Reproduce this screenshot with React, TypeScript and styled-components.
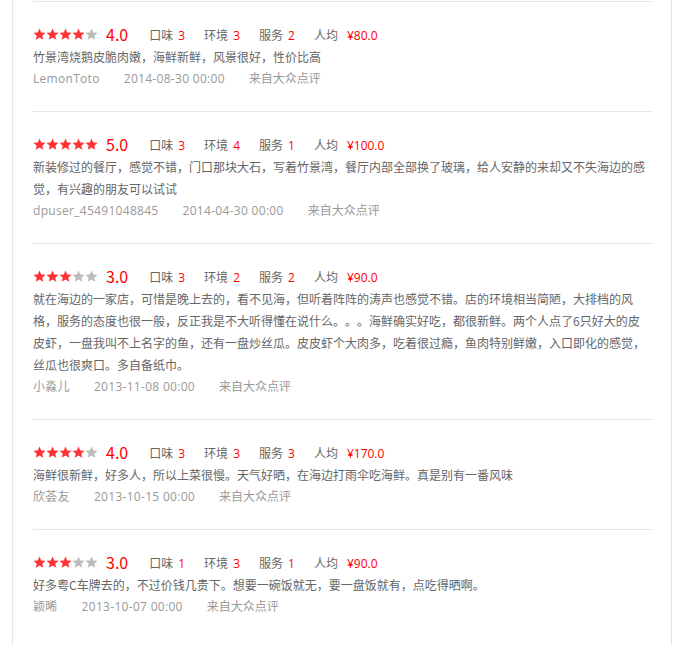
import styled, { createGlobalStyle } from "styled-components";

const GlobalStyle = createGlobalStyle`
	html, body {
		margin: 0;
		padding: 0;
		background: #ffffff;
	}

	body {
		font-family: "Open Sans", "Noto Sans CJK SC", sans-serif;
		font-size: 12px;
		color: #666666;
		text-spacing-trim: space-all;
	}
`;

const Panel = styled.div`
	margin-left: 12px;
	width: 660px;
	min-height: 645px;
	padding: 1px 19px 0 20px;
	box-sizing: border-box;
	border-left: 1px solid #e6e6e6;
	border-right: 1px solid #e6e6e6;
`;

const Review = styled.div`
	border-top: 1px solid #e6e6e6;
	padding: 22px 0 21px;
`;

const ScoreRow = styled.div`
	display: flex;
	align-items: center;
	height: 22px;
`;

const Stars = styled.div`
	display: flex;
	margin-top: -1px;
`;

const Score = styled.span`
	font-size: 16px;
	color: #ff0000;
	margin: -2px 21px 0 8px;
	font-family: "Noto Sans CJK SC", sans-serif;
`;

const Rating = styled.span`
	color: #666666;
	margin-right: 19px;
	font-family: "Noto Sans CJK SC", sans-serif;
`;

const RatingValue = styled.span<{ $gap: number }>`
	color: #ff0000;
	margin-left: ${(p) => p.$gap}px;
	font-family: "Open Sans", sans-serif;
`;

const Content = styled.p`
	margin: 0;
	padding-right: 4px;
	line-height: 22px;
	color: #666666;
	font-family: "Noto Sans CJK SC", sans-serif;
	text-spacing-trim: space-all;
`;

const Meta = styled.div`
	display: flex;
	line-height: 22px;
	color: #999999;
`;

const MetaItem = styled.span<{ $wide?: boolean }>`
	margin-right: 24px;
	letter-spacing: ${(p) => (p.$wide ? "0.3px" : "0")};
`;

const STAR =
	"M6.5 0.6 L8.25 4.5 L12.5 4.85 L9.3 7.65 L10.25 11.8 L6.5 9.6 L2.75 11.8 L3.7 7.65 L0.5 4.85 L4.75 4.5 Z";

const StarIcon = ({ on }: { on: boolean }) => (
	<svg width="13" height="13" viewBox="0 0 13 13">
		<path d={STAR} fill={on ? "#ff3333" : "#bbbbbb"} />
	</svg>
);

interface ReviewData {
	stars: number;
	taste: number;
	env: number;
	service: number;
	price: string;
	text: string;
	user: string;
	date: string;
}

const reviews: ReviewData[] = [
	{
		stars: 4,
		taste: 3,
		env: 3,
		service: 2,
		price: "¥80.0",
		text: "竹景湾烧鹅皮脆肉嫩，海鲜新鲜，风景很好，性价比高",
		user: "LemonToto",
		date: "2014-08-30 00:00",
	},
	{
		stars: 5,
		taste: 3,
		env: 4,
		service: 1,
		price: "¥100.0",
		text: "新装修过的餐厅，感觉不错，门口那块大石，写着竹景湾，餐厅内部全部换了玻璃，给人安静的来却又不失海边的感觉，有兴趣的朋友可以试试",
		user: "dpuser_45491048845",
		date: "2014-04-30 00:00",
	},
	{
		stars: 3,
		taste: 3,
		env: 2,
		service: 2,
		price: "¥90.0",
		text: "就在海边的一家店，可惜是晚上去的，看不见海，但听着阵阵的涛声也感觉不错。店的环境相当简陋，大排档的风格，服务的态度也很一般，反正我是不大听得懂在说什么。。。海鲜确实好吃，都很新鲜。两个人点了6只好大的皮皮虾，一盘我叫不上名字的鱼，还有一盘炒丝瓜。皮皮虾个大肉多，吃着很过瘾，鱼肉特别鲜嫩，入口即化的感觉，丝瓜也很爽口。多自备纸巾。",
		user: "小淼儿",
		date: "2013-11-08 00:00",
	},
	{
		stars: 4,
		taste: 3,
		env: 3,
		service: 3,
		price: "¥170.0",
		text: "海鲜很新鲜，好多人，所以上菜很慢。天气好晒，在海边打雨伞吃海鲜。真是别有一番风味",
		user: "欣荟友",
		date: "2013-10-15 00:00",
	},
	{
		stars: 3,
		taste: 1,
		env: 3,
		service: 1,
		price: "¥90.0",
		text: "好多粤C车牌去的，不过价钱几贵下。想要一碗饭就无，要一盘饭就有，点吃得晒啊。",
		user: "颖晞",
		date: "2013-10-07 00:00",
	},
];

const ReviewItem = ({ data }: { data: ReviewData }) => (
	<Review>
		<ScoreRow>
			<Stars>
				{[0, 1, 2, 3, 4].map((i) => (
					<StarIcon key={i} on={i < data.stars} />
				))}
			</Stars>
			<Score>{data.stars.toFixed(1)}</Score>
			<Rating>
				口味<RatingValue $gap={5}>{data.taste}</RatingValue>
			</Rating>
			<Rating>
				环境<RatingValue $gap={5}>{data.env}</RatingValue>
			</Rating>
			<Rating>
				服务<RatingValue $gap={5}>{data.service}</RatingValue>
			</Rating>
			<Rating>
				人均<RatingValue $gap={9}>{data.price}</RatingValue>
			</Rating>
		</ScoreRow>
		<Content>{data.text}</Content>
		<Meta>
			<MetaItem $wide>{data.user}</MetaItem>
			<MetaItem $wide>{data.date}</MetaItem>
			<MetaItem>来自大众点评</MetaItem>
		</Meta>
	</Review>
);

const App = (): JSX.Element => (
	<>
		<GlobalStyle />
		<Panel>
			{reviews.map((review) => (
				<ReviewItem key={review.user} data={review} />
			))}
		</Panel>
	</>
);

export default App;
